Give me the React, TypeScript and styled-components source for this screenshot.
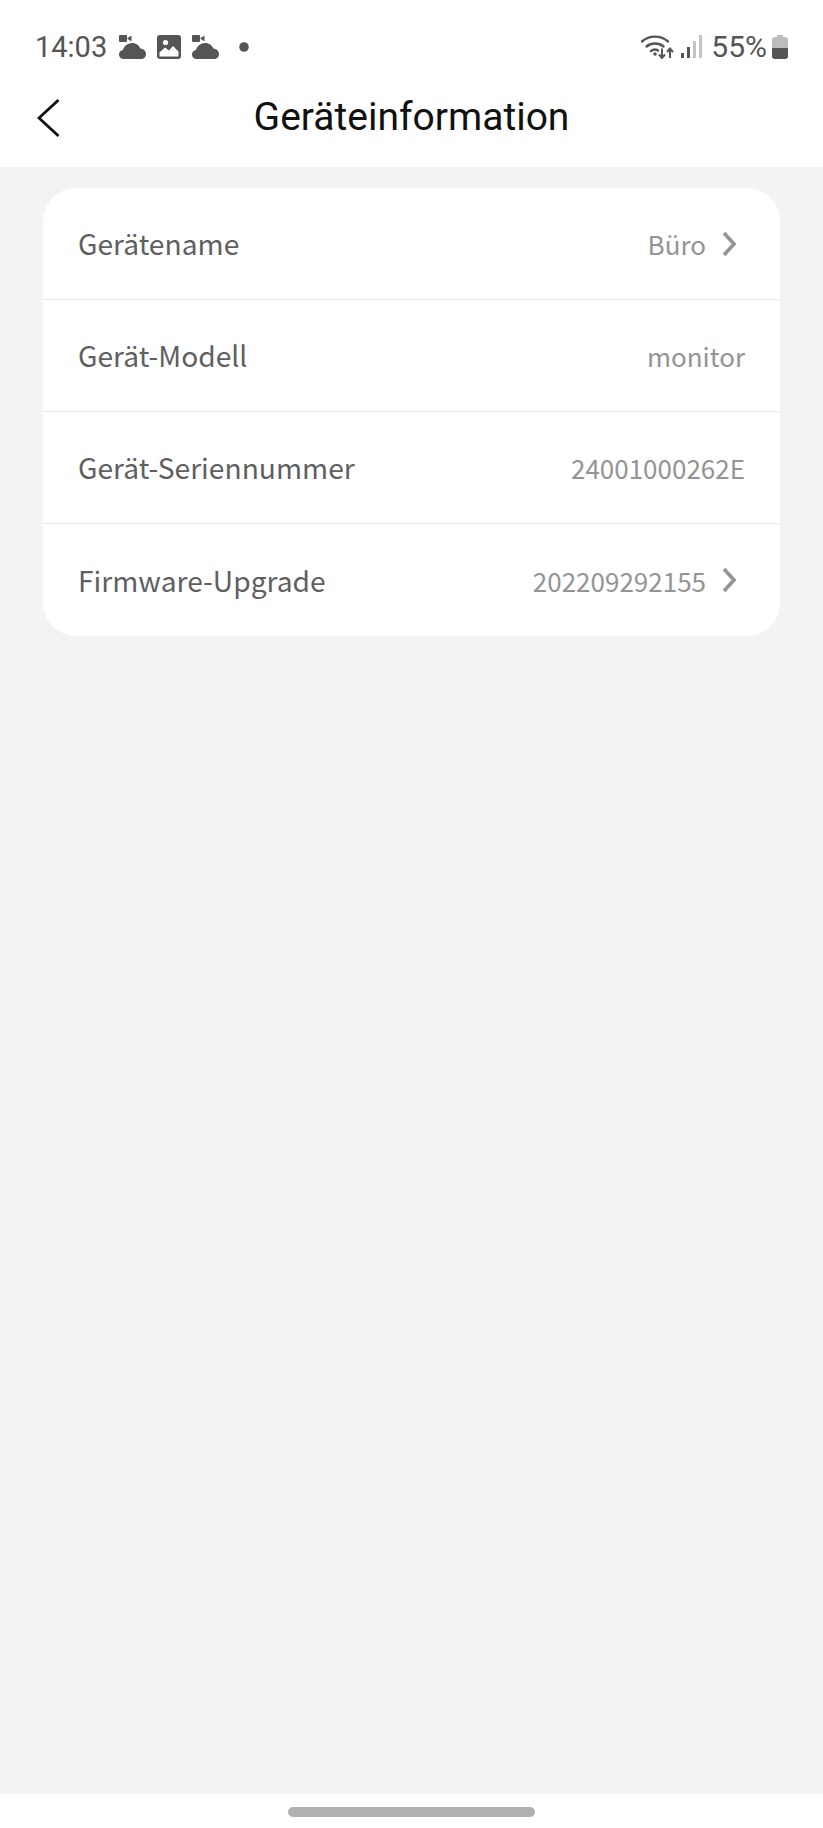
import styled, { createGlobalStyle } from "styled-components";

const GlobalStyle = createGlobalStyle`
  html, body {
    margin: 0;
    padding: 0;
    background: #f3f3f3;
  }
`;

const Page = styled.div`
  width: 823px;
  height: 1828px;
  display: flex;
  flex-direction: column;
  background: #f3f3f3;
  overflow: hidden;
`;

const TopArea = styled.header`
  height: 167px;
  background: #ffffff;
  display: flex;
  flex-direction: column;
`;

const StatusBar = styled.div`
  height: 47px;
  margin-top: 23px;
  padding: 0 35px;
  display: flex;
  align-items: center;
  justify-content: space-between;
  font-family: Roboto, sans-serif;
  font-size: 29px;
  color: #555555;
`;

const StatusGroup = styled.div`
  display: flex;
  align-items: center;
`;

const Clock = styled.span`
  margin-right: 12px;
`;

const Percent = styled.span`
  margin: 0 5px 0 9px;
  font-size: 30px;
`;

const NavBar = styled.div`
  flex: 1;
  position: relative;
  display: flex;
  align-items: center;
  justify-content: center;
  padding-bottom: 3px;
`;

const BackButton = styled.svg`
  position: absolute;
  left: 36px;
  top: 28px;
`;

const Title = styled.h1`
  margin: 0;
  font-family: Roboto, sans-serif;
  font-size: 39px;
  font-weight: 400;
  color: #111111;
`;

const Content = styled.main`
  flex: 1;
  padding: 21px 43px 0 43px;
`;

const Card = styled.section`
  background: #ffffff;
  border-radius: 33px;
  overflow: hidden;
`;

const Row = styled.div`
  height: 111px;
  padding: 0 35px;
  display: flex;
  align-items: center;
  justify-content: space-between;
  font-family: "Noto Sans CJK SC", "Noto Sans", sans-serif;
  border-bottom: 1px solid #e9e9e9;

  &:last-child {
    border-bottom: none;
    height: 112px;
  }
`;

const Label = styled.span`
  font-size: 28.2px;
  color: #5f5f62;
  padding-bottom: 2px;
`;

const ValueGroup = styled.div`
  display: flex;
  align-items: center;
`;

const Value = styled.span`
  font-size: 26px;
  color: #949497;
`;

const Chevron = styled.svg`
  margin-left: 16px;
  margin-right: 9px;
`;

const HomeArea = styled.footer`
  height: 34px;
  background: #ffffff;
  display: flex;
  justify-content: center;
  padding-top: 13px;
  box-sizing: border-box;
`;

const HomeBar = styled.div`
  width: 247px;
  height: 10px;
  border-radius: 5px;
  background: #b0b0b0;
`;

const StatusIcon = styled.svg<{ $gap?: number; $lead?: number }>`
  margin-right: ${(p) => p.$gap ?? 0}px;
  margin-left: ${(p) => p.$lead ?? 0}px;
`;

function CloudCam({ gap }: { gap: number }) {
  return (
    <StatusIcon $gap={gap} width="27" height="24" viewBox="0 0 27 24">
      <rect x="0" y="0" width="8" height="7" rx="1" fill="#555" />
      <path d="M8 3.5 L12.5 0.4 V6.6 Z" fill="#555" />
      <path
        d="M5 24 C2 24 0 22 0 19.4 C0 17 1.7 15.2 4 14.9 C5 11.2 8.6 8 13.4 8 C17 8 20 10.4 21.4 13.6 C24.6 13.8 27 16.3 27 19.2 C27 22 24.8 24 22 24 Z"
        fill="#555"
      />
    </StatusIcon>
  );
}

function ImageIcon() {
  return (
    <StatusIcon $gap={11} width="24" height="24" viewBox="0 0 24 24">
      <rect x="0" y="0" width="24" height="24" rx="3" fill="#555" />
      <path d="M2.5 21.5 V17.5 L8 12.5 L12 15.5 L16 11 L21.5 16.5 V21.5 Z" fill="#fff" />
      <circle cx="8.5" cy="7.5" r="2.6" fill="#fff" />
    </StatusIcon>
  );
}

function Dot() {
  return (
    <StatusIcon $lead={9} width="10" height="10" viewBox="0 0 10 10">
      <circle cx="5" cy="5" r="4.8" fill="#555" />
    </StatusIcon>
  );
}

function WifiIcon() {
  return (
    <StatusIcon width="33" height="26" viewBox="0 0 33 26" fill="none">
      <path d="M1 7.5 C8 1 20 1 27 7.5" stroke="#555" strokeWidth="2.4" strokeLinecap="round" />
      <path d="M5.5 12.5 C10 8.5 18 8.5 22.5 12.5" stroke="#555" strokeWidth="2.4" strokeLinecap="round" />
      <path d="M10 17 C12.3 15.2 15 15.2 17 16.5" stroke="#555" strokeWidth="2.4" strokeLinecap="round" />
      <circle cx="14" cy="20" r="1.8" fill="#555" />
      <path d="M21 14.5 V23 M18 20.5 L21 24 L24 20.5" stroke="#555" strokeWidth="2" />
      <path d="M29 24 V15 M26 18 L29 14.5 L32 18" stroke="#555" strokeWidth="2" />
    </StatusIcon>
  );
}

function SignalIcon() {
  return (
    <StatusIcon $lead={7} width="21" height="23" viewBox="0 0 21 23">
      <rect x="0" y="18" width="3" height="5" fill="#555" />
      <rect x="6" y="12" width="3" height="11" fill="#555" />
      <rect x="12" y="6" width="3" height="17" fill="#c4c4c4" />
      <rect x="18" y="0" width="3" height="23" fill="#c4c4c4" />
    </StatusIcon>
  );
}

function BatteryIcon() {
  return (
    <StatusIcon width="16" height="24" viewBox="0 0 16 24">
      <path d="M5 0 H11 V2 H13 Q16 2 16 5 V13 H0 V5 Q0 2 3 2 H5 Z" fill="#bdbdbd" />
      <path d="M0 13 H16 V21 Q16 24 13 24 H3 Q0 24 0 21 Z" fill="#555" />
    </StatusIcon>
  );
}

function ChevronIcon() {
  return (
    <Chevron width="14" height="26" viewBox="0 0 14 26" fill="none">
      <path d="M2 2 L12 13 L2 24" stroke="#949497" strokeWidth="3.6" />
    </Chevron>
  );
}

const rows = [
  { label: "Gerätename", value: "Büro", link: true },
  { label: "Gerät-Modell", value: "monitor", link: false },
  { label: "Gerät-Seriennummer", value: "24001000262E", link: false },
  { label: "Firmware-Upgrade", value: "202209292155", link: true },
];

export default function App() {
  return (
    <>
      <GlobalStyle />
      <Page>
        <TopArea>
          <StatusBar>
            <StatusGroup>
              <Clock>14:03</Clock>
              <CloudCam gap={11} />
              <ImageIcon />
              <CloudCam gap={11} />
              <Dot />
            </StatusGroup>
            <StatusGroup>
              <WifiIcon />
              <SignalIcon />
              <Percent>55%</Percent>
              <BatteryIcon />
            </StatusGroup>
          </StatusBar>
          <NavBar>
            <BackButton width="24" height="40" viewBox="0 0 24 40" fill="none">
              <path d="M22.5 2 L3 20 L22.5 38" stroke="#111" strokeWidth="2.8" />
            </BackButton>
            <Title>Geräteinformation</Title>
          </NavBar>
        </TopArea>
        <Content>
          <Card>
            {rows.map((r) => (
              <Row key={r.label}>
                <Label>{r.label}</Label>
                <ValueGroup>
                  <Value>{r.value}</Value>
                  {r.link && <ChevronIcon />}
                </ValueGroup>
              </Row>
            ))}
          </Card>
        </Content>
        <HomeArea>
          <HomeBar />
        </HomeArea>
      </Page>
    </>
  );
}
